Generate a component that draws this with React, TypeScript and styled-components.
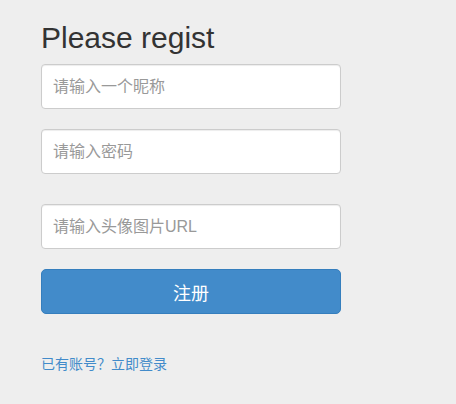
import React from "react";
import styled, { createGlobalStyle } from "styled-components";

const Global = createGlobalStyle`
  html, body {
    margin: 0;
    padding: 0;
    background: #eeeeee;
  }
  body {
    font-family: "Liberation Sans", "Noto Sans CJK SC", sans-serif;
    color: #333333;
  }
  * { box-sizing: border-box; }
`;

const Page = styled.div`
  min-height: 404px;
  background: #eeeeee;
  padding: 21px 0 0 41px;
`;

const Form = styled.form`
  width: 300px;
  display: flex;
  flex-direction: column;
`;

const Title = styled.h2`
  margin: 0 0 10px 0;
  font-family: "Liberation Sans", "Noto Sans CJK SC", sans-serif;
  font-size: 30px;
  font-weight: 400;
  line-height: 33px;
  color: #333333;
`;

const Input = styled.input<{ $gap: number }>`
  display: block;
  width: 300px;
  height: 45px;
  margin-bottom: ${(p) => p.$gap}px;
  padding: 0 11px;
  font-family: "Liberation Sans", "Noto Sans CJK SC", sans-serif;
  font-size: 16px;
  color: #555555;
  background: #ffffff;
  border: 1px solid #cccccc;
  border-radius: 4px;
  box-shadow: inset 0 1px 1px rgba(0, 0, 0, 0.075);
  outline: none;
  &::placeholder {
    color: #999999;
  }
`;

const Button = styled.button`
  display: block;
  width: 300px;
  height: 45px;
  margin: 0;
  padding: 0;
  font-family: "Liberation Sans", "Noto Sans CJK SC", sans-serif;
  font-size: 18px;
  color: #ffffff;
  background: #428bca;
  border: 1px solid #357ebd;
  border-radius: 5px;
  cursor: pointer;
`;

const LoginLink = styled.a`
  display: block;
  margin-top: 40px;
  font-family: "Liberation Sans", "Noto Sans CJK SC", sans-serif;
  font-size: 14px;
  line-height: 20px;
  color: #428bca;
  text-decoration: none;
`;

export default function App() {
  return (
    <>
      <Global />
      <Page>
        <Form onSubmit={(e) => e.preventDefault()}>
          <Title>Please regist</Title>
          <Input $gap={20} type="text" placeholder="请输入一个昵称" />
          <Input $gap={30} type="password" placeholder="请输入密码" />
          <Input $gap={20} type="text" placeholder="请输入头像图片URL" />
          <Button type="submit">注册</Button>
          <LoginLink href="#">已有账号？立即登录</LoginLink>
        </Form>
      </Page>
    </>
  );
}
